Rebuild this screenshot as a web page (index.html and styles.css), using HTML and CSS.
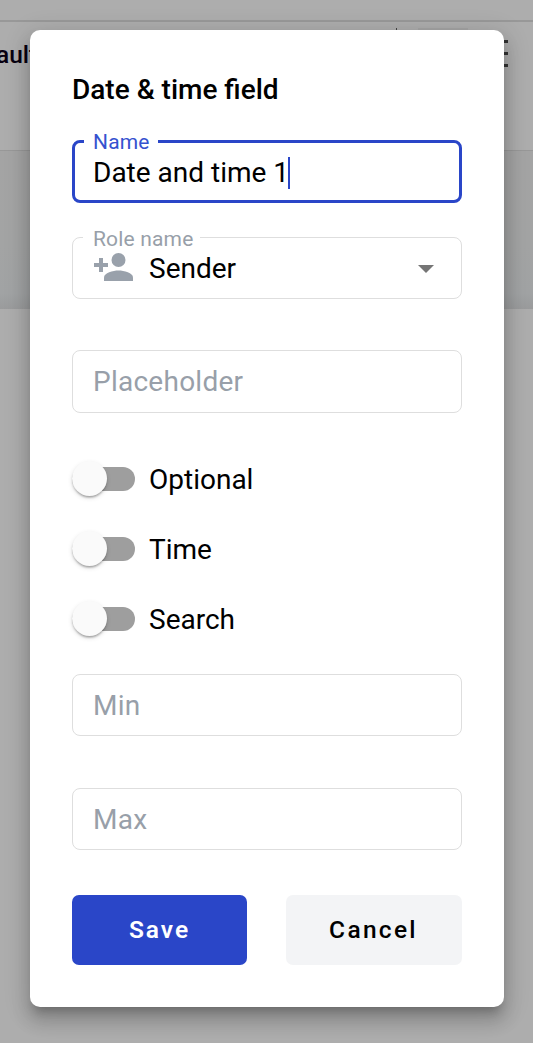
FILE: index.html
```html
<!DOCTYPE html>
<html lang="en">
<head>
<meta charset="utf-8">
<title>Date &amp; time field</title>
<link rel="stylesheet" href="styles.css">
</head>
<body>
<div class="page">
  <div class="strip"></div>
  <div class="toolbar">
    <span class="doc-title">ault</span>
    <span class="divider"></span>
    <span class="chip"></span>
    <span class="menu"><i></i><i></i><i></i></span>
  </div>
  <div class="canvas"></div>
  <div class="sheet"></div>
</div>
<form class="dialog">
  <h1 class="title">Date &amp; time field</h1>
  <div class="field field-name">
    <span class="label">Name</span>
    <span class="value">Date and time 1</span><span class="caret"></span>
  </div>
  <div class="field field-role">
    <span class="label">Role name</span>
    <svg class="person" viewBox="0 0 40 30" width="40" height="30"><path d="M5 6h4v5h5v4H9v5H5v-5H0v-4h5z"/><circle cx="24.500" cy="8" r="7"/><path d="M10 29v-3.500c0-4.700 9-7 14.500-7s14.500 2.300 14.500 7V29z"/></svg>
    <span class="value role">Sender</span>
    <span class="arrow"></span>
  </div>
  <div class="field field-placeholder"><span class="hint">Placeholder</span></div>
  <div class="switches">
    <div class="switch"><span class="track"><span class="thumb"></span></span><span class="switch-text">Optional</span></div>
    <div class="switch"><span class="track"><span class="thumb"></span></span><span class="switch-text">Time</span></div>
    <div class="switch"><span class="track"><span class="thumb"></span></span><span class="switch-text">Search</span></div>
  </div>
  <div class="field field-min"><span class="hint">Min</span></div>
  <div class="field field-max"><span class="hint">Max</span></div>
  <div class="actions">
    <button type="button" class="btn save">Save</button>
    <button type="button" class="btn cancel">Cancel</button>
  </div>
</form>
</body>
</html>
```
FILE: styles.css
```css
* { box-sizing: border-box; }
body {
  margin: 0;
  height: 1043px;
  overflow: hidden;
  position: relative;
  font-family: Roboto, "Liberation Sans", sans-serif;
  font-size: 28px;
  color: #000;
}
.page { display: flex; flex-direction: column; height: 1043px; background: #adadad; }
.strip { height: 22px; border-bottom: 2px solid #989898; }
.toolbar {
  height: 129px;
  border-bottom: 1px solid #989898;
  display: flex;
  align-items: flex-start;
  padding-top: 6px;
}
.doc-title {
  width: 71px;
  margin: 10px 0 0 -4px;
  font-size: 24.5px;
  font-weight: 500;
  line-height: 33px;
  color: #080010;
}
.divider { width: 1px; height: 40px; margin-left: 329px; background: #444; }
.chip { width: 50px; height: 40px; margin-left: 21px; background: #a4a4a4; }
.menu { display: flex; flex-direction: column; gap: 9px; width: 30px; margin: 12px 0 0 10px; }
.menu i { height: 3px; background: #333; }
.canvas { height: 158px; background: linear-gradient(#a4a4a4, #a3a4a4 60%, #a1a3a4 90%, #9a9b9c); }
.sheet { flex: 1; background: #adadad; }
.dialog {
  position: absolute;
  left: 30px;
  top: 30px;
  width: 474px;
  height: 977px;
  padding: 42px;
  display: flex;
  flex-direction: column;
  background: #fff;
  border-radius: 10px;
  box-shadow: 0 9px 9px -5px rgba(0,0,0,.2), 0 14px 17.5px 2px rgba(0,0,0,.14), 0 5px 25px 3.5px rgba(0,0,0,.12);
}
.title { margin: 0 0 33px; font-size: 28px; font-weight: 500; line-height: 35px; }
.field {
  position: relative;
  flex: none;
  display: flex;
  align-items: center;
  height: 62px;
  padding: 0 20px;
  border: 1px solid #dedede;
  border-radius: 8px;
}
.field-name { height: 63px; border: 3px solid #2a46c8; padding: 1px 18px 0; }
.label {
  position: absolute;
  top: -11px;
  left: 10px;
  padding: 0 7px 0 10px;
  font-size: 21px;
  line-height: 25px;
  letter-spacing: .17px;
  white-space: nowrap;
  background: #fff;
  color: #989fa9;
}
.field-name .label { left: 9px; top: -13px; padding: 0 8px 0 9px; color: #3552cf; }
.caret { width: 2px; height: 32px; margin: 1px 0 0 -1px; background: #2a46c8; }
.field-role { margin-top: 34px; }
.person { fill: #99a1ab; margin: -2px -1px 0 1px; }
.role { margin-left: 16px; padding-top: 1px; }
.arrow {
  margin: 1px 7px 0 auto;
  border: 8px solid transparent;
  border-top-color: #757575;
  border-bottom: 0;
}
.field-placeholder { margin-top: 51px; height: 63px; }
.hint { color: #989fa9; letter-spacing: .25px; }
.switches { display: flex; flex-direction: column; gap: 28px; margin-top: 45px; }
.switch { display: flex; align-items: center; gap: 14px; height: 42px; line-height: 42px; }
.switch-text { padding-top: 2px; }
.track { width: 63px; height: 24px; border-radius: 12px; background: #9e9e9e; display: flex; align-items: center; }
.thumb {
  flex: none;
  width: 35px;
  height: 35px;
  margin-top: -1px;
  border-radius: 50%;
  background: #fafafa;
  box-shadow: 0 3px 2px -2px rgba(0,0,0,.2), 0 2px 2px rgba(0,0,0,.14), 0 2px 5px rgba(0,0,0,.12);
}
.field-min { margin-top: 34px; }
.field-max { margin-top: 52px; }
.actions { display: flex; gap: 39px; margin-top: 45px; }
.btn {
  height: 70px;
  width: 175px;
  padding: 0;
  border: 0;
  border-radius: 7px;
  font: 500 24.5px/68px Roboto, "Liberation Sans", sans-serif;
  letter-spacing: 2.3px;
}
.save { background: #2a46c8; color: #fff; font-weight: 600; letter-spacing: 2px; }
.cancel { width: 176px; padding-right: 1px; background: #f3f4f6; color: #000; }
```
